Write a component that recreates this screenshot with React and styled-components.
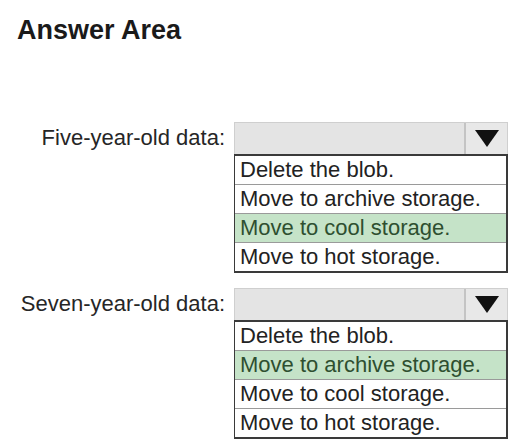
import React from "react";
import styled, { createGlobalStyle } from "styled-components";

const GlobalStyle = createGlobalStyle`
  html, body {
    margin: 0;
    padding: 0;
    background: #ffffff;
  }
  body {
    font-family: "Liberation Sans", Arial, sans-serif;
    color: #222;
  }
`;

const questions = [
  {
    label: "Five-year-old data:",
    options: [
      "Delete the blob.",
      "Move to archive storage.",
      "Move to cool storage.",
      "Move to hot storage.",
    ],
    answer: 2,
  },
  {
    label: "Seven-year-old data:",
    options: [
      "Delete the blob.",
      "Move to archive storage.",
      "Move to cool storage.",
      "Move to hot storage.",
    ],
    answer: 1,
  },
];

const ArrowIcon = () => (
  <svg width="24" height="17" viewBox="0 0 24 17">
    <polygon points="0,0 24,0 12,17" fill="#111" />
  </svg>
);

const App = () => {
  return (
    <Page>
      <GlobalStyle />
      <Title>Answer Area</Title>
      <Form>
        {questions.map((q, i) => (
          <Row key={i}>
            <Label>{q.label}</Label>
            <Control>
              <Select>
                <SelectValue />
                <ArrowButton>
                  <ArrowIcon />
                </ArrowButton>
              </Select>
              <OptionList>
                {q.options.map((opt, j) => (
                  <Option key={j} selected={j === q.answer}>
                    {opt}
                  </Option>
                ))}
              </OptionList>
            </Control>
          </Row>
        ))}
      </Form>
    </Page>
  );
};

const Page = styled.div`
  width: 524px;
  height: 448px;
  box-sizing: border-box;
  padding: 15px 0 0 17px;
`;

const Title = styled.h1`
  margin: 0;
  font-size: 27px;
  font-weight: bold;
  color: #1a1a1a;
  line-height: 30px;
`;

const Form = styled.div`
  display: flex;
  flex-direction: column;
  gap: 15px;
  margin-top: 77px;
`;

const Row = styled.div`
  display: grid;
  grid-template-columns: 208px 274px;
  column-gap: 9px;
  align-items: start;
`;

const Label = styled.div`
  text-align: right;
  font-size: 22px;
  line-height: 31px;
  color: #262626;
`;

const Control = styled.div`
  display: flex;
  flex-direction: column;
`;

const Select = styled.div`
  display: flex;
  height: 31px;
  background: #e4e4e4;
  border: 1px solid #cfcfcf;
  border-bottom: none;
`;

const SelectValue = styled.div`
  flex: 1;
`;

const ArrowButton = styled.div`
  width: 41px;
  display: flex;
  align-items: center;
  justify-content: center;
  border-left: 2px solid #c4c4c4;
  background: #e8e8e8;
`;

const OptionList = styled.div`
  display: flex;
  flex-direction: column;
  border: 1px solid #3a3a3a;
  border-width: 2px 2px 2px 1px;
  background: #fff;
`;

const Option = styled.div`
  height: 28px;
  line-height: 28px;
  padding-left: 5px;
  font-size: 22px;
  color: ${(p) => (p.selected ? "#2e4f30" : "#222")};
  background: ${(p) => (p.selected ? "#c5e3c8" : "#fff")};
  border-top: 1px solid #9a9a9a;
  white-space: nowrap;

  &:first-child {
    border-top: none;
  }
`;

export default App;
